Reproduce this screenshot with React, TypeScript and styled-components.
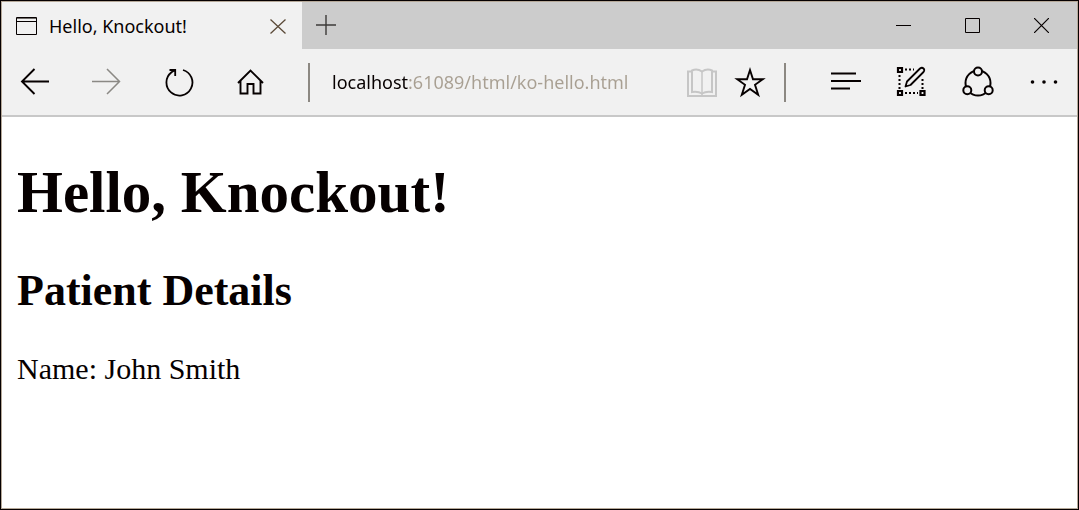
import React from "react";
import styled, { createGlobalStyle } from "styled-components";

const GlobalStyle = createGlobalStyle`
  *, *::before, *::after { box-sizing: border-box; }
  body { margin: 0; background: #fff; }
`;

const Window = styled.div`
  display: flex;
  flex-direction: column;
  min-height: 100vh;
  border: 1px solid #060000;
  color: #060000;
`;

const Frame = styled.div`
  flex: 1;
  display: flex;
  flex-direction: column;
  border: 1px solid #b5a898;
  background: #fff;
`;

const TabStrip = styled.header`
  display: flex;
  height: 47px;
  background: #cccccc;
`;

const Tab = styled.div`
  display: flex;
  align-items: center;
  width: 300px;
  padding: 0 8px 0 14px;
  background: #f1f1f1;
`;

const TabTitle = styled.span`
  flex: 1;
  margin-left: 12px;
  font: 18px/28px "Noto Sans", "Open Sans", sans-serif;
  white-space: nowrap;
`;

const IconButton = styled.button<{ $width: number }>`
  display: flex;
  flex: none;
  align-items: center;
  justify-content: center;
  width: ${(p) => p.$width}px;
  padding: 0;
  border: 0;
  background: none;
  color: inherit;

  &:disabled {
    color: #8b8985;
  }
`;

const WindowControls = styled.div`
  display: flex;
  margin-left: auto;
  padding-right: 1px;
`;

const Toolbar = styled.nav`
  display: flex;
  align-items: center;
  height: 68px;
  border-bottom: 2px solid #c8c8c8;
  background: #f1f1f1;
`;

const Group = styled.div<{ $pad: string }>`
  display: flex;
  align-self: stretch;
  gap: 16px;
  padding: ${(p) => p.$pad};
`;

const Divider = styled.span`
  width: 2px;
  height: 39px;
  background: #8c8882;
`;

const Address = styled.input`
  flex: 1;
  min-width: 0;
  height: 32px;
  margin: 0 16px 0 22px;
  padding: 0;
  border: 0;
  outline: 0;
  font: 18px/28px "Noto Sans", "Open Sans", sans-serif;
  background: linear-gradient(90deg, #060000 76px, #a89f92 76px);
  background-clip: text;
  -webkit-background-clip: text;
  -webkit-text-fill-color: transparent;
`;

const Page = styled.main`
  padding: 40px 15px;
  font-family: "Liberation Serif", "Times New Roman", serif;
`;

const Title = styled.h1`
  margin: 0 0 38px;
  font-size: 59px;
  line-height: 70px;
`;

const Subtitle = styled.h2`
  margin: 0 0 35px;
  font-size: 44px;
  line-height: 52px;
`;

const Line = styled.p`
  margin: 0;
  font-size: 30px;
  line-height: 34px;
`;

type IconProps = { w: number; h: number; stroke?: number; color?: string; children: React.ReactNode };

const Icon = ({ w, h, stroke = 2, color = "currentColor", children }: IconProps) => (
  <svg width={w} height={h} viewBox={`0 0 ${w} ${h}`} fill="none" stroke={color} strokeWidth={stroke} aria-hidden="true">
    {children}
  </svg>
);

export default function App() {
  return (
    <>
      <GlobalStyle />
      <Window>
        <Frame>
          <TabStrip>
            <Tab>
              <Icon w={21} h={18} stroke={1}>
                <path d="M.5.5h20v17H.5zM1 4.5h19" />
                <path d="M1 1.5h19" stroke="#6d6a68" />
              </Icon>
              <TabTitle>Hello, Knockout!</TabTitle>
              <IconButton $width={32} aria-label="Close tab">
                <Icon w={16} h={16} stroke={1.3} color="#5b4a38">
                  <path d="M.5 1.5l15 14M15.5 1.5l-15 14" />
                </Icon>
              </IconButton>
            </Tab>
            <IconButton $width={48} aria-label="New tab">
              <Icon w={20} h={21} stroke={1.4} color="#3c3a38">
                <path d="M10 0v20M0 10h20" />
              </Icon>
            </IconButton>
            <WindowControls>
              <IconButton $width={69} aria-label="Minimize">
                <Icon w={15} h={15} stroke={1}>
                  <path d="M0 7.5h15" />
                </Icon>
              </IconButton>
              <IconButton $width={69} aria-label="Maximize">
                <Icon w={15} h={15} stroke={1}>
                  <path d="M.5.5h14v14H.5z" />
                </Icon>
              </IconButton>
              <IconButton $width={69} aria-label="Close">
                <Icon w={15} h={15} stroke={1.2}>
                  <path d="M0 0l15 15M15 0L0 15" />
                </Icon>
              </IconButton>
            </WindowControls>
          </TabStrip>
          <Toolbar aria-label="Navigation">
            <Group $pad="0 29px 0 5px">
              <IconButton $width={56} aria-label="Back">
                <Icon w={30} h={28} stroke={1.9}>
                  <path d="M29 13.5H2M14.5 1L2 13.5 14.5 26" />
                </Icon>
              </IconButton>
              <IconButton $width={56} aria-label="Forward" disabled>
                <Icon w={30} h={28} stroke={1.5}>
                  <path d="M0 13.5h28M15 1l12.5 12.5L15 26" />
                </Icon>
              </IconButton>
              <IconButton $width={56} aria-label="Refresh">
                <Icon w={30} h={30} stroke={1.8}>
                  <path d="M19 3A13 13 0 1 1 7.5 5.2L11 3M5.5 3H11.2v6" />
                </Icon>
              </IconButton>
              <IconButton $width={56} aria-label="Home">
                <Icon w={30} h={30} stroke={1.9}>
                  <path d="M2 16L14.5 3.5 27 16M4.5 14v12.5h7V17h6v9.5h7V14" />
                </Icon>
              </IconButton>
            </Group>
            <Divider />
            <Address aria-label="Address" spellCheck={false} defaultValue="localhost:61089/html/ko-hello.html" />
            <Group $pad="0 18px 0 0">
              <IconButton $width={32} aria-label="Reading view" disabled>
                <Icon w={32} h={32} color="#c6c6c6">
                  <path d="M6 5.5H2V30h28V5.5h-4" />
                  <path d="M6 26V4.5q5-2.5 10 1 5-3.5 10-1V26q-6-1-10 1.5Q12 25 6 26z" />
                  <path d="M16 6v23" strokeWidth="1.5" />
                </Icon>
              </IconButton>
              <IconButton $width={32} aria-label="Add to favorites">
                <Icon w={32} h={32} stroke={1.9}>
                  <path d="M16 4l3 9.2h9.8L21 18.8l3.2 10L16 23l-8.2 5.8 3.2-10-7.8-5.6H13z" />
                </Icon>
              </IconButton>
            </Group>
            <Divider />
            <Group $pad="0 8px 0 35px">
              <IconButton $width={50} aria-label="Hub">
                <Icon w={32} h={32}>
                  <path d="M1 7.5h25M1 15h30M1 22.5h19" />
                </Icon>
              </IconButton>
              <IconButton $width={50} aria-label="Make a web note">
                <Icon w={32} h={32}>
                  <path d="M2 2h4v4H2zM2 25h4v4H2zM24.5 25h4v4h-4z" strokeWidth="2.2" />
                  <path d="M9 3.5h9M3.5 9v14M9 27h13M26.5 13v10" strokeDasharray="2 2" />
                  <path d="M9.5 20.5l1.5-5L24 2.5q2-1.5 3.5 0t0 3.5l-13 13z" strokeWidth="1.8" strokeLinejoin="round" />
                </Icon>
              </IconButton>
              <IconButton $width={50} aria-label="Share">
                <Icon w={32} h={32}>
                  <circle cx="16" cy="17" r="12.5" />
                  <g fill="#f1f1f1">
                    <circle cx="16" cy="5.5" r="4" />
                    <circle cx="5.3" cy="24.3" r="4" />
                    <circle cx="26.7" cy="24.3" r="4" />
                  </g>
                </Icon>
              </IconButton>
              <IconButton $width={50} aria-label="More actions">
                <Icon w={32} h={32}>
                  <g fill="currentColor" stroke="none">
                    <circle cx="4.5" cy="16" r="1.8" />
                    <circle cx="16" cy="16" r="1.8" />
                    <circle cx="27.5" cy="16" r="1.8" />
                  </g>
                </Icon>
              </IconButton>
            </Group>
          </Toolbar>
          <Page>
            <Title>Hello, Knockout!</Title>
            <Subtitle>Patient Details</Subtitle>
            <Line>Name: John Smith</Line>
          </Page>
        </Frame>
      </Window>
    </>
  );
}
